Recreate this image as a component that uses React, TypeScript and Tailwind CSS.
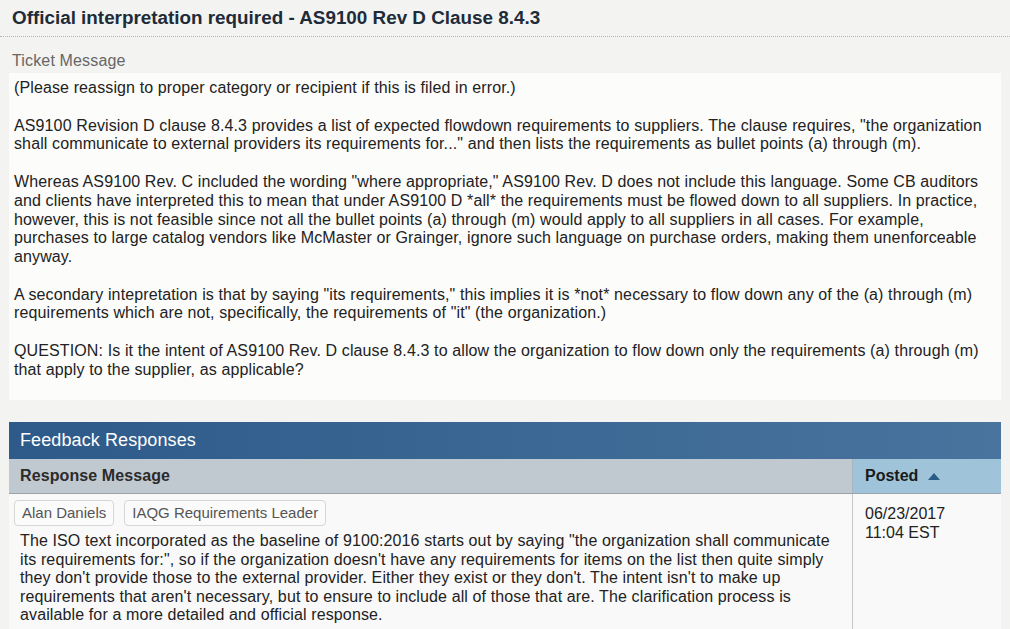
import React from "react";

const paras = [
  "(Please reassign to proper category or recipient if this is filed in error.)",
  "AS9100 Revision D clause 8.4.3 provides a list of expected flowdown requirements to suppliers. The clause requires, \"the organization shall communicate to external providers its requirements for...\" and then lists the requirements as bullet points (a) through (m).",
  "Whereas AS9100 Rev. C included the wording \"where appropriate,\" AS9100 Rev. D does not include this language. Some CB auditors and clients have interpreted this to mean that under AS9100 D *all* the requirements must be flowed down to all suppliers. In practice, however, this is not feasible since not all the bullet points (a) through (m) would apply to all suppliers in all cases. For example, purchases to large catalog vendors like McMaster or Grainger, ignore such language on purchase orders, making them unenforceable anyway.",
  "A secondary intepretation is that by saying \"its requirements,\" this implies it is *not* necessary to flow down any of the (a) through (m) requirements which are not, specifically, the requirements of \"it\" (the organization.)",
  "QUESTION: Is it the intent of AS9100 Rev. D clause 8.4.3 to allow the organization to flow down only the requirements (a) through (m) that apply to the supplier, as applicable?",
];

export default function App() {
  return (
    <div
      className="w-[1010px] h-[629px] overflow-hidden bg-[#f3f3f2] text-[#222]"
      style={{ fontFamily: '"Liberation Sans", Arial, sans-serif' }}
    >
      <div className="h-[37px] border-b border-dotted border-[#b5b5b5] flex items-center px-[12px]">
        <h1 className="text-[18.85px] font-bold text-[#1e2b38] leading-none">
          Official interpretation required - AS9100 Rev D Clause 8.4.3
        </h1>
      </div>
      <div className="pr-[9px] pl-[9px]">
        <div className="text-[16px] text-[#666] px-[3px] pt-[15px] leading-[18px] h-[36px] tracking-[0.15px]">Ticket Message</div>
        <div className="bg-[#fcfcfb] px-[5px] pt-[6px] text-[16px] leading-[18.7px] tracking-[0.12px] text-[#222] h-[327px]">
          {paras.map((p, i) => (
            <p key={i} className="mb-[19px]">{p}</p>
          ))}
        </div>
        <div className="mt-[22px]">
          <div className="h-[37px] bg-gradient-to-r from-[#2d5a89] to-[#48749e] text-white text-[18px] flex items-center px-[11px] tracking-[0.1px]">
            Feedback Responses
          </div>
          <div className="flex h-[35px] border-b border-[#9aa4ad]">
            <div className="flex-1 bg-[#c0c8d0] flex items-center px-[11px] text-[16px] font-bold text-[#2b2b2b] tracking-[0.1px]">
              Response Message
            </div>
            <div className="w-[149px] bg-[#9fc4d9] border-l border-[#aab5bf] flex items-center pl-[12px] text-[16px] font-bold text-[#1a1a1a] gap-[10px]">
              Posted
              <svg width="12" height="7" viewBox="0 0 12 7"><polygon points="6,0 12,7 0,7" fill="#2a5b86" /></svg>
            </div>
          </div>
          <div className="flex bg-[#f9f9f9] h-[200px]">
            <div className="flex-1 pl-[5px] pt-[6px] pr-[12px]">
              <div className="flex gap-[10px]">
                <span className="border border-[#d6d6d6] bg-[#fbfbfb] rounded-[4px] px-[7px] h-[26px] flex items-center text-[15px] text-[#555]">Alan Daniels</span>
                <span className="border border-[#d6d6d6] bg-[#fbfbfb] rounded-[4px] px-[7px] h-[26px] flex items-center text-[15px] text-[#555]">IAQG Requirements Leader</span>
              </div>
              <p className="pl-[6px] mt-[6px] text-[16px] leading-[18.5px] tracking-[0.12px] text-[#222] max-w-[830px]">
                The ISO text incorporated as the baseline of 9100:2016 starts out by saying "the organization shall communicate its requirements for:", so if the organization doesn't have any requirements for items on the list then quite simply they don't provide those to the external provider. Either they exist or they don't. The intent isn't to make up requirements that aren't necessary, but to ensure to include all of those that are. The clarification process is available for a more detailed and official response.
              </p>
            </div>
            <div className="w-[149px] border-l border-[#c8c8c8] pl-[12px] pt-[11px] text-[16px] leading-[18.5px] text-[#222]">
              <div>06/23/2017</div>
              <div>11:04 EST</div>
            </div>
          </div>
        </div>
      </div>
    </div>
  );
}
